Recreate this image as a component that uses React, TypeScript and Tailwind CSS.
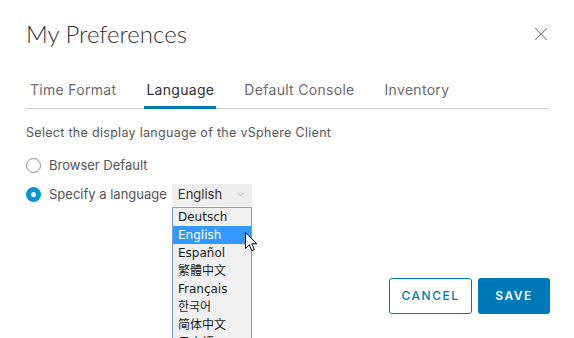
import { X, ChevronDown } from 'lucide-react';

const tabs = ['Time Format', 'Language', 'Default Console', 'Inventory'];
const languages = ['Deutsch', 'English', 'Español', '繁體中文', 'Français', '한국어', '简体中文', '日本語'];

function Cursor() {
    return (
        <svg width="13" height="21" viewBox="0 0 13 21" className="absolute left-[245px] top-[232px]">
            <path
                d="M0.5 0.5 L0.5 16.5 L4.3 12.8 L6.8 18.8 L9.3 17.7 L6.8 11.8 L11.8 11.8 Z"
                fill="#fff"
                stroke="#000"
                strokeWidth="1"
                strokeLinejoin="miter"
            />
        </svg>
    );
}

export default function App() {
    return (
        <div className="relative w-[574px] h-[338px] overflow-hidden bg-white font-['Inter',sans-serif] text-[#313131]">
            <div className="px-[26px] pt-[18px]">
                <div className="flex items-center justify-between">
                    <h1 className="font-['Lato',sans-serif] text-[24px] leading-[32px] font-light text-[#313131]">
                        My Preferences
                    </h1>
                    <X size={22} strokeWidth={1.1} className="text-[#737373] mr-[-4px]" />
                </div>

                <div className="mt-[30px] flex gap-[26px] border-b border-[#cccccc] pl-[2px]">
                    {tabs.map((t) => (
                        <div
                            key={t}
                            className={
                                'px-[2px] pb-[6px] text-[14px] leading-[20px] tracking-[0.3px] border-b-[3px] mb-[-1px] ' +
                                (t === 'Language' ? 'border-[#0079b8] text-[#313131]' : 'border-transparent text-[#6b6b6b]')
                            }
                        >
                            {t}
                        </div>
                    ))}
                </div>

                <p className="mt-[15px] text-[12.5px] leading-[18px] tracking-[0.3px] text-[#565656]">
                    Select the display language of the vSphere Client
                </p>

                <div className="mt-[14px] flex items-center gap-[8px]">
                    <span className="w-[15px] h-[15px] rounded-full border border-[#8c8c8c] bg-white" />
                    <span className="text-[13px] text-[#565656]">Browser Default</span>
                </div>

                <div className="mt-[8px] flex items-center">
                    <span className="w-[15px] h-[15px] rounded-full bg-[#0095d3] flex items-center justify-center">
                        <span className="w-[5px] h-[5px] rounded-full bg-white" />
                    </span>
                    <span className="ml-[8px] text-[13px] text-[#565656]">Specify a language</span>
                    <div className="ml-[5px] w-[80px] h-[22px] bg-[#eeeeee] flex items-center justify-between pl-[6px] pr-[6px]">
                        <span className="text-[13px] text-[#313131]">English</span>
                        <ChevronDown size={11} strokeWidth={1.2} className="text-[#a0a0a0]" />
                    </div>
                </div>
            </div>

            <div className="absolute left-[172px] top-[207px] w-[80px] h-[140px] bg-[#f0f0f0] border border-[#7a9cd3] font-['DejaVu_Sans','Noto_Sans_CJK_SC',sans-serif]">
                {languages.map((l) => (
                    <div
                        key={l}
                        className={
                            'h-[18px] leading-[18px] pl-[5px] text-[12px] ' +
                            (l === 'English' ? 'bg-[#3399ff] text-white' : 'text-[#1a1a1a]')
                        }
                    >
                        {l}
                    </div>
                ))}
            </div>

            <Cursor />

            <div className="absolute right-[24px] top-[278px] flex gap-[6px]">
                <button className="w-[83px] h-[36px] rounded-[3px] border border-[#0079b8] text-[#0079b8] text-[12px] font-medium tracking-[1.5px] bg-white">
                    CANCEL
                </button>
                <button className="w-[72px] h-[36px] rounded-[3px] bg-[#0079b8] text-white text-[12px] font-semibold tracking-[1.5px]">
                    SAVE
                </button>
            </div>
        </div>
    );
}
